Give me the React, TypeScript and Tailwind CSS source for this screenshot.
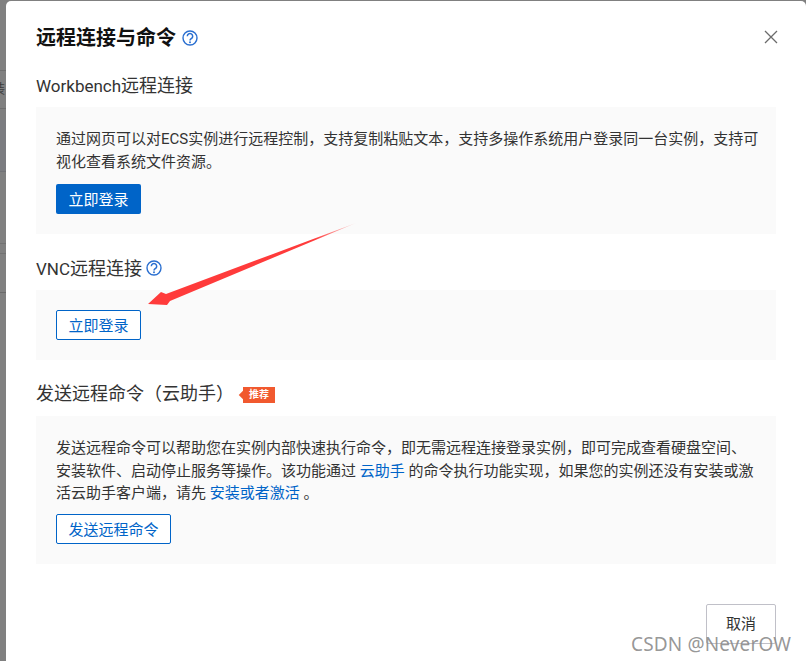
const FONT = "font-['Roboto','Noto_Sans_CJK_SC',sans-serif]";

function HelpIcon() {
  return (
    <svg width="16" height="16" viewBox="0 0 16 16" fill="none" className="shrink-0">
      <circle cx="8" cy="8" r="7" stroke="#2a6fd0" strokeWidth="1.4" />
      <path d="M5.3 6.2a2.7 2.7 0 1 1 4.1 2.3c-.9.5-1.4 1-1.4 2" stroke="#2a6fd0" strokeWidth="1.5" fill="none" />
      <circle cx="8" cy="12.2" r="0.95" fill="#2a6fd0" />
    </svg>
  );
}

function Backdrop() {
  return (
    <div className="w-[6px] shrink-0 flex flex-col bg-[#808080]">
      <div className="h-[71px] border-b border-[#6f6f6f]" />
      <div className="h-[38px] border-b border-[#6f6f6f] overflow-hidden text-[13px] leading-[36px] text-[#3c3c3c] -indent-[8px] whitespace-nowrap">
        装
      </div>
      <div className="h-[11px] bg-[#7f7f7f]" />
      <div className="h-[52px] bg-[#7b7c80] border-b border-[#717276]" />
      <div className="h-[72px] border-b border-[#727272]" />
      <div className="h-[10px] border-b border-[#727272]" />
      <div className="h-[39px] border-b border-[#6a6a6a]" />
      <div className="flex-1" />
    </div>
  );
}

function OutlineButton({ label, width }: { label: string; width: string }) {
  return (
    <button className={`${width} h-[30px] pt-[3px] border border-[#0064c8] rounded-[2px] text-[15px] leading-none text-[#0064c8] bg-white`}>
      {label}
    </button>
  );
}

export default function App() {
  return (
    <div className={`relative w-[806px] h-[661px] overflow-hidden flex bg-[#808080] text-[#333333] ${FONT}`}>
      <Backdrop />
      <div className="flex-1 min-w-0 mt-px bg-white rounded-tl-[5px] rounded-tr-[5px] px-[30px] flex flex-col">
        <div className="h-[70px] pt-[23px] flex items-start justify-between">
          <div className="flex items-center gap-[6px] h-[28px]">
            <h1 className="text-[20px] leading-[28px] font-bold text-[#111111]">远程连接与命令</h1>
            <HelpIcon />
          </div>
          <svg width="14" height="14" viewBox="0 0 14 14" className="mt-[6px] mr-[-2px]">
            <path d="M1 1l12 12M13 1L1 13" stroke="#6b6b6b" strokeWidth="1.3" />
          </svg>
        </div>

        <h2 className="h-[36px] pt-px text-[18px] leading-[28px]"><span className="text-[17px]">Workbench</span>远程连接</h2>
        <section className="bg-[#fafafa] px-5 pt-[21px] pb-5">
          <p className="-mr-[4px] text-[15px] leading-[22.5px] mb-[11px]">
            通过网页可以对ECS实例进行远程控制，支持复制粘贴文本，支持多操作系统用户登录同一台实例，支持可视化查看系统文件资源。
          </p>
          <button className="block w-[85px] h-[30px] pt-[3px] rounded-[2px] bg-[#0064c8] text-[15px] leading-none text-white">立即登录</button>
        </section>

        <div className="h-[56px] pt-[21px] flex items-start gap-[4px]">
          <h2 className="text-[18px] leading-[28px]"><span className="text-[17px]">VNC</span>远程连接</h2>
          <div className="mt-[5px]"><HelpIcon /></div>
        </div>
        <section className="bg-[#fafafa] px-5 pt-5 pb-5">
          <OutlineButton label="立即登录" width="block w-[85px]" />
        </section>

        <div className="h-[56px] pt-[20px] flex items-start">
          <h2 className="text-[18px] leading-[28px] w-[207px]">发送远程命令（云助手）</h2>
          <span className="relative mt-[7px] h-[16px] w-[32px] bg-[#f1592f] text-white text-[10px] leading-[16px] font-bold text-center">
            推荐
            <span className="absolute -left-[3px] top-[5px] w-[6px] h-[6px] rotate-45 bg-[#f1592f]" />
          </span>
        </div>
        <section className="bg-[#fafafa] px-5 pt-[21px] pb-5">
          <p className="-mr-[2px] text-[15px] leading-[22.5px] mb-[9.5px]">
            发送远程命令可以帮助您在实例内部快速执行命令，即无需远程连接登录实例，即可完成查看硬盘空间、安装软件、启动停止服务等操作。该功能通过 <span className="text-[#0064c8]">云助手</span> 的命令执行功能实现，如果您的实例还没有安装或激活云助手客户端，请先 <span className="text-[#0064c8]">安装或者激活</span> 。
          </p>
          <OutlineButton label="发送远程命令" width="block w-[115px]" />
        </section>

        <div className="pt-[40px] flex justify-end">
          <button className="w-[70px] h-[40px] border border-[#c0c0c8] rounded-[2px] bg-white text-[15px] text-[#333333]">取消</button>
        </div>
      </div>

      <svg width="806" height="661" className="absolute left-0 top-0 pointer-events-none">
        <defs>
          <linearGradient id="tail" x1="356" y1="223" x2="148" y2="304" gradientUnits="userSpaceOnUse">
            <stop offset="0" stopColor="#ff3b3b" stopOpacity="0.15" />
            <stop offset="0.2" stopColor="#ff3b3b" />
            <stop offset="1" stopColor="#ff3b3b" />
          </linearGradient>
        </defs>
        <polygon points="356,223 170,301 167,305 148,304 161,292 166,294" fill="url(#tail)" />
      </svg>
      <span className="absolute left-[631px] top-[631px] text-[19px] leading-[26px] tracking-[0.15px] text-[#8a8a8a]/90 font-['Noto_Sans',sans-serif]">
        CSDN @NeverOW
      </span>
    </div>
  );
}
